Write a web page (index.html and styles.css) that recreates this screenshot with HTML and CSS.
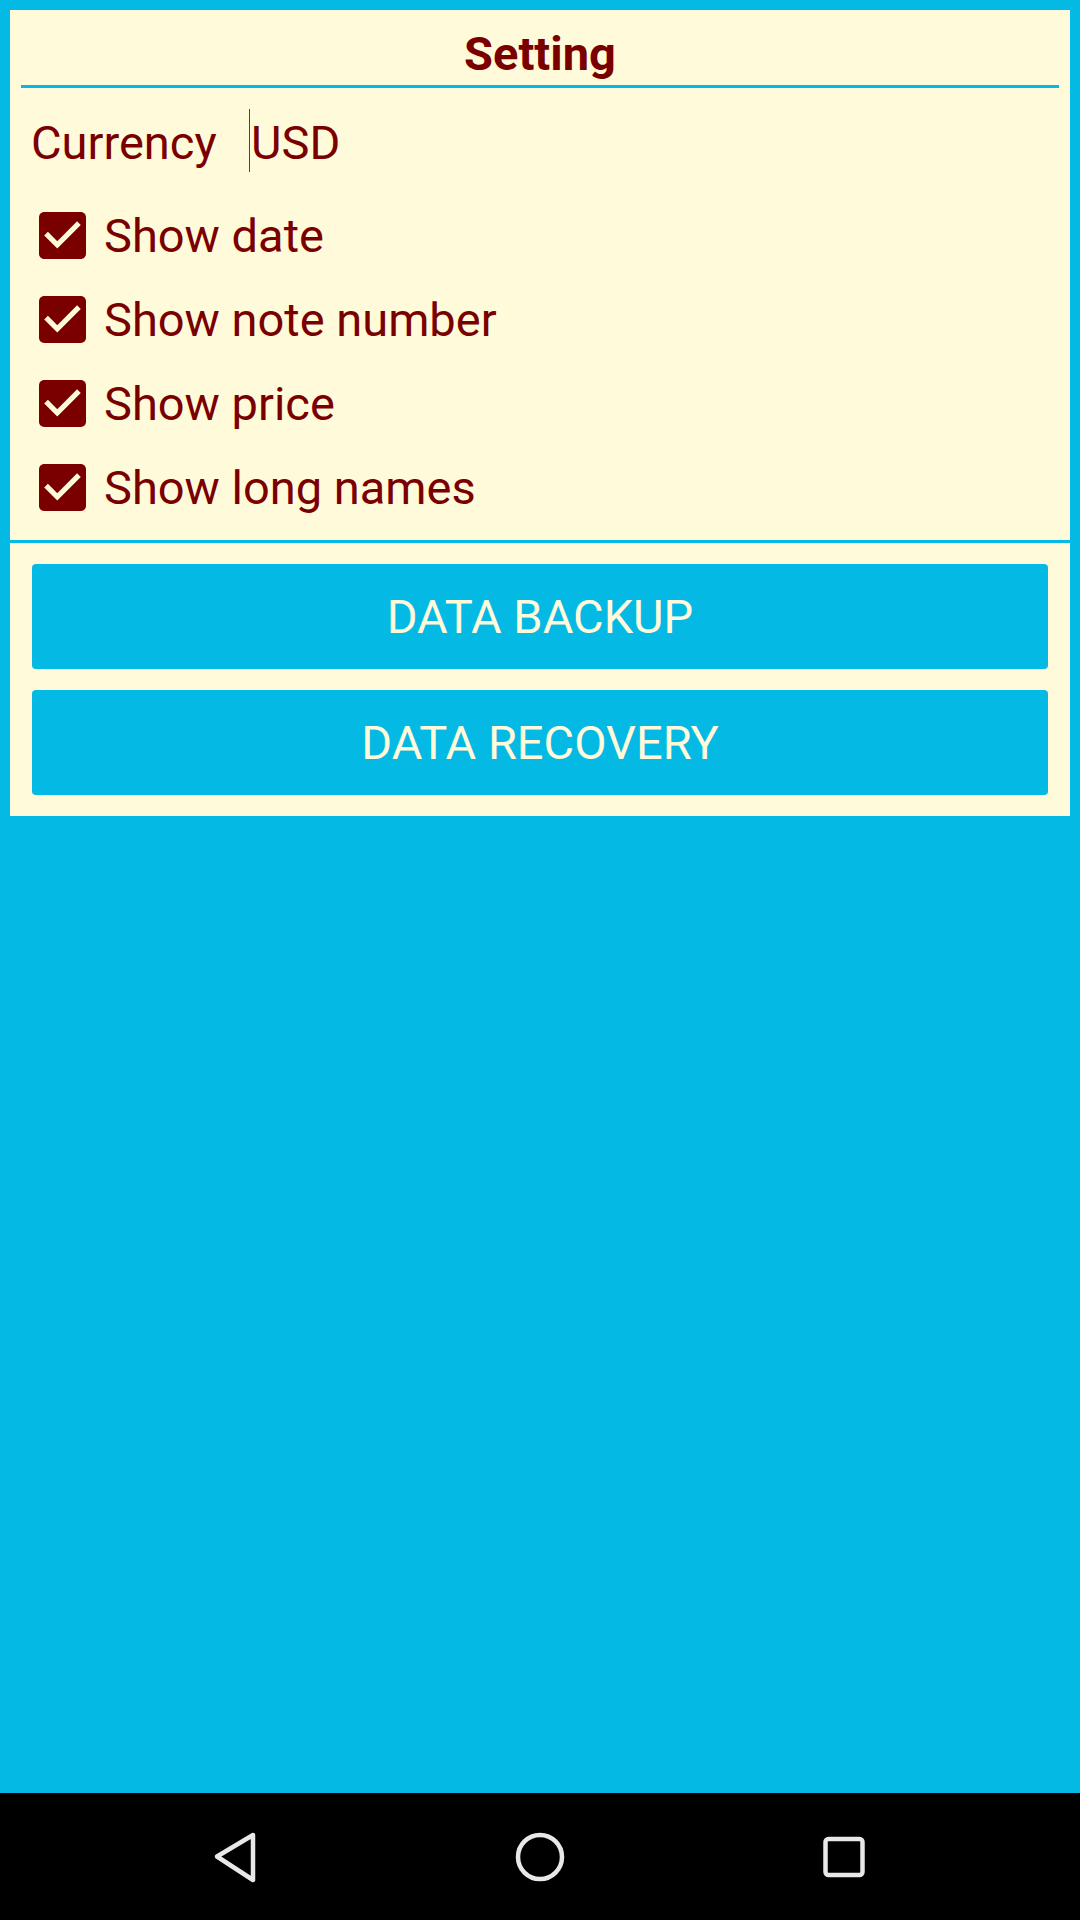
FILE: index.html
```html
<!DOCTYPE html>
<html lang="en">
<head>
<meta charset="utf-8">
<title>Setting</title>
<link rel="stylesheet" href="styles.css">
</head>
<body>
<div class="screen">
  <main class="content">
    <section class="panel settings">
      <h1 class="title">Setting</h1>
      <div class="currency-row">
        <span class="currency-label">Currency</span>
        <span class="currency-field">USD</span>
      </div>
      <ul class="options">
        <li class="option"><span class="checkbox"><svg viewBox="3 3 18 18" width="47" height="47"><path class="box" d="M19 3H5c-1.11 0-2 .9-2 2v14c0 1.1.89 2 2 2h14c1.11 0 2-.9 2-2V5c0-1.1-.89-2-2-2z"/><path class="tick" d="M10 17l-5-5 1.41-1.41L10 14.17l7.59-7.59L19 8z"/></svg></span><span class="option-label">Show date</span></li>
        <li class="option"><span class="checkbox"><svg viewBox="3 3 18 18" width="47" height="47"><path class="box" d="M19 3H5c-1.11 0-2 .9-2 2v14c0 1.1.89 2 2 2h14c1.11 0 2-.9 2-2V5c0-1.1-.89-2-2-2z"/><path class="tick" d="M10 17l-5-5 1.41-1.41L10 14.17l7.59-7.59L19 8z"/></svg></span><span class="option-label">Show note number</span></li>
        <li class="option"><span class="checkbox"><svg viewBox="3 3 18 18" width="47" height="47"><path class="box" d="M19 3H5c-1.11 0-2 .9-2 2v14c0 1.1.89 2 2 2h14c1.11 0 2-.9 2-2V5c0-1.1-.89-2-2-2z"/><path class="tick" d="M10 17l-5-5 1.41-1.41L10 14.17l7.59-7.59L19 8z"/></svg></span><span class="option-label">Show price</span></li>
        <li class="option"><span class="checkbox"><svg viewBox="3 3 18 18" width="47" height="47"><path class="box" d="M19 3H5c-1.11 0-2 .9-2 2v14c0 1.1.89 2 2 2h14c1.11 0 2-.9 2-2V5c0-1.1-.89-2-2-2z"/><path class="tick" d="M10 17l-5-5 1.41-1.41L10 14.17l7.59-7.59L19 8z"/></svg></span><span class="option-label">Show long names</span></li>
      </ul>
    </section>
    <section class="panel actions">
      <button class="action-btn" type="button">DATA BACKUP</button>
      <button class="action-btn" type="button">DATA RECOVERY</button>
    </section>
  </main>
  <nav class="navbar">
    <span class="nav-cell"><svg viewBox="0 0 60 60" width="60" height="60"><polygon class="nav-stroke" points="47,8 11,29.5 47,53"/></svg></span>
    <span class="nav-cell"><svg viewBox="0 0 60 60" width="60" height="60"><circle class="nav-stroke" cx="30" cy="30" r="22"/></svg></span>
    <span class="nav-cell"><svg viewBox="0 0 60 60" width="60" height="60"><rect class="nav-stroke" x="11.5" y="12" width="37" height="36" rx="3"/></svg></span>
  </nav>
</div>
</body>
</html>
```

FILE: styles.css
```css
* {
  box-sizing: border-box;
}

html, body {
  margin: 0;
  padding: 0;
}

body {
  width: 1080px;
  height: 1920px;
  background: #05b9e5;
  font-family: Roboto, "Liberation Sans", sans-serif;
  color: #7a0000;
}

.screen {
  display: flex;
  flex-direction: column;
  height: 1920px;
}

.content {
  flex: 1;
  padding: 10px 10px 0;
  display: flex;
  flex-direction: column;
  gap: 3px;
}

.panel {
  background: #fffad9;
}

.settings {
  padding-bottom: 11px;
}

.title {
  margin: 0 11px;
  padding: 16px 0 4px;
  font-size: 47px;
  font-weight: 700;
  line-height: normal;
  text-align: center;
  border-bottom: 3px solid #05b9e5;
}

.currency-row {
  display: flex;
  margin-top: 21px;
  height: 63px;
  font-size: 47px;
  line-height: normal;
}

.currency-label {
  width: 239px;
  padding: 6px 0 0 21px;
}

.currency-field {
  border-left: 1px solid #8a2a20;
  padding: 6px 0 0 1px;
}

.options {
  list-style: none;
  margin: 21px 0 0;
  padding: 0;
}

.option {
  display: flex;
  align-items: center;
  height: 84px;
  padding-left: 29px;
  font-size: 47px;
  line-height: normal;
}

.checkbox {
  display: flex;
  width: 47px;
  height: 47px;
  margin-right: 18px;
}

.checkbox .box {
  fill: #7a0000;
}

.checkbox .tick {
  fill: #fffad9;
}

.actions {
  display: flex;
  flex-direction: column;
  gap: 21px;
  padding: 21px 22px;
}

.action-btn {
  display: block;
  width: 100%;
  height: 105px;
  border: none;
  border-radius: 4px;
  background: #05b9e5;
  color: #fffad9;
  font-family: Roboto, "Liberation Sans", sans-serif;
  font-size: 47px;
  font-weight: 400;
  padding: 0;
  text-align: center;
}

.navbar {
  height: 127px;
  background: #000;
  display: flex;
  justify-content: center;
  align-items: center;
  gap: 244px;
}

.nav-cell {
  display: flex;
  width: 60px;
  height: 60px;
}

.nav-stroke {
  fill: none;
  stroke: #e8e8e8;
  stroke-width: 4.5;
  stroke-linejoin: round;
}
```
